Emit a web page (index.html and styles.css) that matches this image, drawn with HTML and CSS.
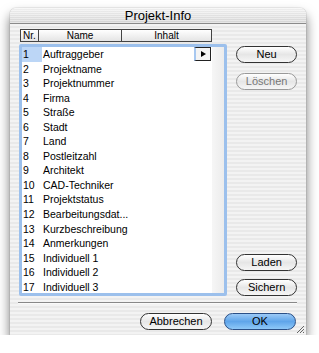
FILE: index.html
```html
<!DOCTYPE html>
<html lang="de">
<head>
  <meta charset="UTF-8" />
  <title>Projekt-Info</title>
  <link rel="stylesheet" href="styles.css">
</head>
<body>
  <div class="window">
    <div class="titlebar">Projekt-Info</div>

    <div class="content">
      <div class="left">
        <div class="head">
          <div class="hcell nr">Nr.</div>
          <div class="hcell name">Name</div>
          <div class="hcell inhalt">Inhalt</div>
        </div>
        <div class="list">
          <div class="rows">
            <div class="row first"><span class="num">1</span><span class="label">Auftraggeber</span><span class="arrow"></span></div>
            <div class="row"><span class="num">2</span><span class="label">Projektname</span></div>
            <div class="row"><span class="num">3</span><span class="label">Projektnummer</span></div>
            <div class="row"><span class="num">4</span><span class="label">Firma</span></div>
            <div class="row"><span class="num">5</span><span class="label">Straße</span></div>
            <div class="row"><span class="num">6</span><span class="label">Stadt</span></div>
            <div class="row"><span class="num">7</span><span class="label">Land</span></div>
            <div class="row"><span class="num">8</span><span class="label">Postleitzahl</span></div>
            <div class="row"><span class="num">9</span><span class="label">Architekt</span></div>
            <div class="row"><span class="num">10</span><span class="label">CAD-Techniker</span></div>
            <div class="row"><span class="num">11</span><span class="label">Projektstatus</span></div>
            <div class="row"><span class="num">12</span><span class="label">Bearbeitungsdat...</span></div>
            <div class="row"><span class="num">13</span><span class="label">Kurzbeschreibung</span></div>
            <div class="row"><span class="num">14</span><span class="label">Anmerkungen</span></div>
            <div class="row"><span class="num">15</span><span class="label">Individuell 1</span></div>
            <div class="row"><span class="num">16</span><span class="label">Individuell 2</span></div>
            <div class="row"><span class="num">17</span><span class="label">Individuell 3</span></div>
          </div>
          <div class="track"></div>
        </div>
      </div>

      <div class="side">
        <button class="btn">Neu</button>
        <button class="btn off">Löschen</button>
        <div class="spacer"></div>
        <button class="btn">Laden</button>
        <button class="btn">Sichern</button>
      </div>
    </div>

    <div class="sep"></div>

    <div class="footer">
      <button class="btn wide">Abbrechen</button>
      <button class="btn wide ok">OK</button>
    </div>

    <svg class="grip" width="9" height="9" viewBox="0 0 9 9">
      <path d="M1 8 L8 1 M4 8 L8 4 M7 8 L8 7" stroke="#666" stroke-width="1" fill="none"/>
    </svg>
  </div>
</body>
</html>
```

FILE: styles.css
```css
body {
  margin: 0;
  padding: 0;
  background: #fff;
  font-family: "Liberation Sans", Arial, sans-serif;
  font-size: 11px;
  color: #000;
}
.window {
  position: relative;
  margin: 8px 0 0 10px;
  width: 296px;
  height: 327px;
  border-radius: 6px 6px 0 0;
  background: repeating-linear-gradient(#f3f3f3 0 2px, #e9e9e9 2px 4px);
  box-shadow: 0 7px 12px rgba(0, 0, 0, 0.55), 0 0 1px rgba(0, 0, 0, 0.6);
  display: flex;
  flex-direction: column;
}
.titlebar {
  height: 15px;
  border-radius: 6px 6px 0 0;
  border-bottom: 1px solid #8a8a8a;
  background: repeating-linear-gradient(rgba(255, 255, 255, 0.35) 0 1px, rgba(0, 0, 0, 0.02) 1px 2px), linear-gradient(#f4f4f4, #d8d8d8);
  text-align: center;
  font-size: 13px;
  line-height: 16px;
}
.content {
  display: flex;
  padding: 5px 9px 0 9px;
}
.left {
  width: 209px;
}
.head {
  display: flex;
  height: 13px;
  padding-left: 1px;
}
.hcell {
  box-sizing: border-box;
  height: 13px;
  border: 1px solid #444;
  background: linear-gradient(#ffffff, #e4e4e4);
  text-align: center;
  font-size: 10px;
  line-height: 11px;
}
.nr { width: 19px; }
.name { width: 83px; border-left: 0; }
.inhalt { width: 90px; border-left: 0; }
.list {
  margin-top: 2px;
  height: 246px;
  border: 3px solid #9cc0ec;
  border-radius: 2px;
  background: #fff;
  display: flex;
}
.rows {
  flex: 1;
}
.row {
  position: relative;
  display: flex;
  height: 14.55px;
  line-height: 14.55px;
  font-size: 10.5px;
}
.num {
  width: 20px;
  padding-left: 1px;
  box-sizing: border-box;
}
.first .num {
  background: #bcd6f6;
}
.label {
  margin-left: 1px;
}
.arrow {
  position: absolute;
  right: 1px;
  top: 0;
  width: 17px;
  height: 14px;
  box-sizing: border-box;
  border: 1px solid #222;
  border-left: 2px solid #a8c8f0;
  background: #f4f4f4;
}
.arrow::after {
  content: "";
  position: absolute;
  left: 5px;
  top: 3px;
  border-left: 5px solid #000;
  border-top: 3px solid transparent;
  border-bottom: 3px solid transparent;
}
.track {
  width: 12px;
  background: linear-gradient(90deg, #f6f6f6, #ececec);
}
.side {
  display: flex;
  flex-direction: column;
  margin-left: 9px;
  padding-top: 17px;
  width: 61px;
}
.spacer {
  flex: 1;
}
.btn {
  box-sizing: border-box;
  height: 17px;
  padding: 0;
  border: 1px solid #333;
  border-radius: 9px;
  background: linear-gradient(#ffffff 0%, #e6e6e6 50%, #f6f6f6 100%);
  font-family: "Liberation Sans", Arial, sans-serif;
  font-size: 11px;
  line-height: 15px;
  color: #000;
  margin-bottom: 10px;
}
.off {
  border-color: #999;
  color: #777;
}
.side .btn:last-child {
  margin-bottom: 0;
}
.side .spacer + .btn {
  margin-bottom: 8px;
}
.sep {
  margin: 6px 9px 0 8px;
  height: 1px;
  background: #888;
  border-bottom: 1px solid #fafafa;
}
.footer {
  display: flex;
  justify-content: flex-end;
  gap: 12px;
  padding: 9px 10px 0 0;
}
.footer .btn {
  width: 72px;
  margin: 0;
}
.ok {
  border-color: #2a4f86;
  background: linear-gradient(#9ccaf6 0%, #5fa5ea 50%, #8ec8f8 100%);
}
.grip {
  position: absolute;
  right: 1px;
  bottom: 1px;
}
```
